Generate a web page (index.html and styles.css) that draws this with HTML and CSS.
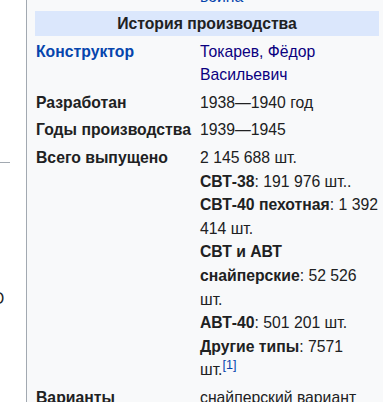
FILE: index.html
```html
<!DOCTYPE html>
<html lang="ru">
<head>
<meta charset="utf-8">
<link rel="stylesheet" href="styles.css">
</head>
<body>
<div class="page">
  <div class="aside">
    <div class="rule"></div>
    <div class="frag">О</div>
  </div>
  <div class="infobox">
    <div class="row">
      <div class="label"></div>
      <div class="value"><a class="link">война</a></div>
    </div>
    <div class="header">История производства</div>
    <div class="row">
      <div class="label"><a class="link">Конструктор</a></div>
      <div class="value"><a class="visited">Токарев, Фёдор<br>Васильевич</a></div>
    </div>
    <div class="row">
      <div class="label">Разработан</div>
      <div class="value">1938—1940 год</div>
    </div>
    <div class="row">
      <div class="label">Годы производства</div>
      <div class="value">1939—1945</div>
    </div>
    <div class="row">
      <div class="label">Всего выпущено</div>
      <div class="value">
        2 145 688 шт.<br>
        <b>СВТ-38</b>: 191 976 шт..<br>
        <b>СВТ-40 пехотная</b>: 1 392<br>
        414 шт.<br>
        <b>СВТ и АВТ</b><br>
        <b>снайперские</b>: 52 526<br>
        шт.<br>
        <b>АВТ-40</b>: 501 201 шт.<br>
        <b>Другие типы</b>: 7571<br>
        шт.<sup class="ref"><a class="link">[1]</a></sup>
      </div>
    </div>
    <div class="row">
      <div class="label">Варианты</div>
      <div class="value">снайперский вариант</div>
    </div>
  </div>
</div>
</body>
</html>
```
FILE: styles.css
```css
html, body {
  margin: 0;
  padding: 0;
  background: #ffffff;
}
body {
  font-family: "Liberation Sans", Arial, sans-serif;
  font-size: 15.75px;
  line-height: 23.6px;
  color: #202122;
  overflow: hidden;
  height: 402px;
}
.page {
  display: flex;
  align-items: flex-start;
  height: 402px;
}
.aside {
  width: 26px;
  flex: none;
  overflow: hidden;
}
.rule {
  margin-top: 162px;
  width: 10px;
  height: 1px;
  background: #a2a9b1;
}
.frag {
  margin-top: 124px;
  margin-left: -8px;
  white-space: nowrap;
}
.infobox {
  flex: 1;
  margin-top: -17px;
  padding: 0 4px 0 8px;
  background: #f8f9fa;
  border-left: 1px solid #a2a9b1;
  min-height: 440px;
}
.row {
  display: grid;
  grid-template-columns: 165px 1fr;
  padding: 2px 0;
}
.label {
  padding-left: 1px;
  font-weight: bold;
  white-space: nowrap;
}
.value {
  white-space: nowrap;
}
.header {
  background: #dbe7fc;
  text-align: center;
  font-weight: bold;
  height: 25px;
  line-height: 25px;
  margin-bottom: 2px;
}
.link {
  color: #0645ad;
  text-decoration: none;
}
.visited {
  color: #0b0080;
  text-decoration: none;
}
.ref {
  font-size: 12.6px;
  line-height: 1;
  vertical-align: 6px;
}
```
